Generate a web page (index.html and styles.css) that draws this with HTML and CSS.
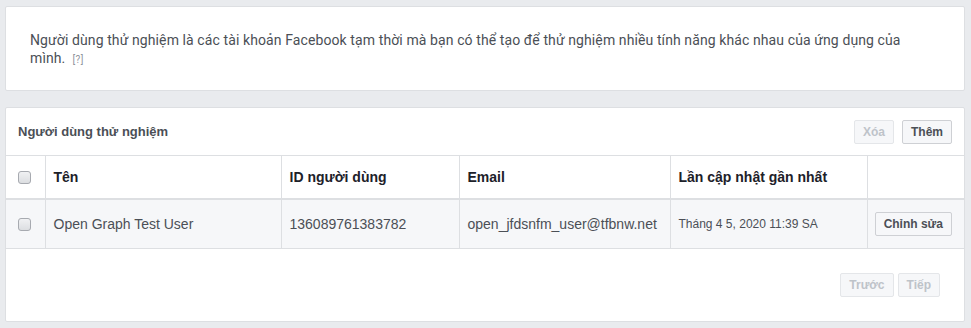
FILE: index.html
```html
<!DOCTYPE html>
<html lang="vi">
<head>
<meta charset="utf-8">
<link rel="stylesheet" href="styles.css">
</head>
<body>
<div class="page">
  <div class="card intro">
    <p class="intro-text">Người dùng thử nghiệm là các tài khoản Facebook tạm thời mà bạn có thể tạo để thử nghiệm nhiều tính năng khác nhau của ứng dụng của mình.<span class="help">[?]</span></p>
  </div>
  <div class="card users">
    <div class="users-head">
      <h2 class="users-title">Người dùng thử nghiệm</h2>
      <div class="actions">
        <button class="btn disabled">Xóa</button>
        <button class="btn">Thêm</button>
      </div>
    </div>
    <table class="grid">
      <colgroup>
        <col class="c-check"><col class="c-name"><col class="c-id"><col class="c-email"><col class="c-date"><col class="c-act">
      </colgroup>
      <thead>
        <tr>
          <th class="check"><span class="cb"></span></th>
          <th>Tên</th>
          <th>ID người dùng</th>
          <th>Email</th>
          <th>Lần cập nhật gần nhất</th>
          <th></th>
        </tr>
      </thead>
      <tbody>
        <tr>
          <td class="check"><span class="cb"></span></td>
          <td>Open Graph Test User</td>
          <td>136089761383782</td>
          <td>open_jfdsnfm_user@tfbnw.net</td>
          <td class="date">Tháng 4 5, 2020 11:39 SA</td>
          <td class="act"><button class="btn">Chỉnh sửa</button></td>
        </tr>
      </tbody>
    </table>
    <div class="pager">
      <button class="btn disabled">Trước</button>
      <button class="btn disabled">Tiếp</button>
    </div>
  </div>
</div>
</body>
</html>
```
FILE: styles.css
```css
html, body {
  margin: 0;
  padding: 0;
  background: #e9ebee;
}
.page {
  width: 960px;
  padding: 6px 0 0 5px;
  display: flex;
  flex-direction: column;
  gap: 16px;
}
.card {
  background: #fff;
  border: 1px solid #dddfe2;
  border-radius: 2px;
}
.intro {
  padding: 24px 24px 23px 24px;
}
.intro-text {
  margin: 0;
  font-family: Roboto, "Noto Sans", sans-serif;
  font-size: 14px;
  letter-spacing: 0.1px;
  line-height: 18px;
  color: #4b4f56;
  padding-right: 30px;
}
.help {
  display: inline-block;
  font-size: 10px;
  line-height: 12px;
  letter-spacing: 0.5px;
  color: #90949c;
  margin-left: 7px;
}
.users-head {
  display: flex;
  align-items: center;
  justify-content: space-between;
  height: 47px;
  padding: 0 12px;
  border-bottom: 1px solid #dddfe2;
}
.users-title {
  margin: 0;
  font-family: "Liberation Sans", Arial, sans-serif;
  font-size: 13px;
  font-weight: bold;
  color: #4b4f56;
}
.actions {
  display: flex;
  gap: 8px;
  margin-top: 1px;
}
.btn {
  font-family: "Liberation Sans", Arial, sans-serif;
  font-size: 12px;
  font-weight: bold;
  color: #4b4f56;
  background: #f6f7f9;
  border: 1px solid #ced0d4;
  border-radius: 2px;
  height: 24px;
  padding: 0 8px;
  line-height: 22px;
  white-space: nowrap;
  cursor: pointer;
}
.btn.disabled {
  color: #bec3c9;
  border-color: #e4e6e9;
}
.grid {
  width: 100%;
  border-collapse: collapse;
  table-layout: fixed;
  font-family: "Liberation Sans", Arial, sans-serif;
  font-size: 14px;
}
.c-check { width: 39px; }
.c-name { width: 236px; }
.c-id { width: 178px; }
.c-email { width: 211px; }
.c-date { width: 197px; }
.grid th {
  height: 42px;
  text-align: left;
  font-weight: bold;
  color: #1d2129;
  padding: 0 8px;
  border-bottom: 2px solid #dddfe2;
  border-left: 1px solid #dddfe2;
}
.grid td {
  height: 48px;
  padding: 0 8px;
  color: #4b4f56;
  background: #f6f7f9;
  border-bottom: 1px solid #dddfe2;
  border-left: 1px solid #dddfe2;
  white-space: nowrap;
}
.grid th:first-child, .grid td:first-child {
  border-left: none;
}
.grid .check {
  padding: 0 0 0 12px;
}
.cb {
  display: block;
  width: 11px;
  height: 11px;
  border: 1px solid #a7aab0;
  border-radius: 3px;
  background: linear-gradient(#f0f1f3, #dcdee1);
}
.grid td.date {
  font-size: 12px;
}
.grid td.act {
  padding: 0 12px 0 0;
  text-align: right;
}
.pager {
  display: flex;
  justify-content: flex-end;
  gap: 4px;
  padding: 24px 24px 24px;
}
```
